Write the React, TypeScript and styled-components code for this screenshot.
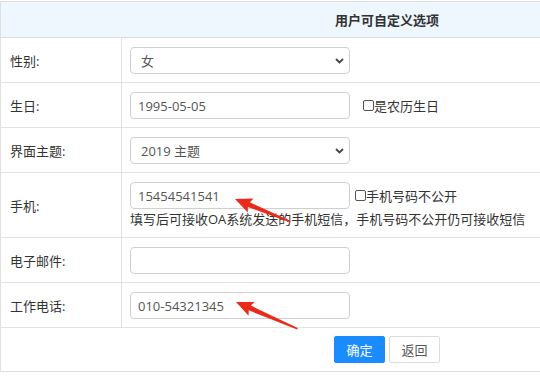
import React from "react";
import styled, { createGlobalStyle } from "styled-components";

const GlobalStyle = createGlobalStyle`
  html, body { margin: 0; padding: 0; overflow: hidden; background: #fff; }
  body {
    font-family: "Open Sans", "Noto Sans CJK SC", sans-serif;
    font-size: 13px;
    color: #333;
  }
`;

const Page = styled.div`
  position: relative;
  padding-top: 1px;
  width: 540px;
  height: 378px;
  overflow: hidden;
`;

const Table = styled.table`
  width: 774px;
  border-collapse: collapse;
  table-layout: fixed;
  border: 1px solid #dfdfdf;
`;

const LabelCol = styled.col`
  width: 121px;
`;

const FieldCol = styled.col``;

const HeadCell = styled.th`
  height: 35px;
  padding: 0;
  background: #eef7fe;
  font-weight: bold;
  font-size: 13px;
  color: #333;
  text-align: center;
  border-bottom: 1px solid #dcdcdc;
`;

const Row = styled.tr`
  border-bottom: 1px solid #e2e2e2;
`;

const LabelCell = styled.td`
  padding: 0 0 0 9px;
  border-right: 1px solid #e2e2e2;
  vertical-align: middle;
  color: #333;
  white-space: nowrap;
`;

const FieldCell = styled.td`
  padding: 9px 8px 8px 8px;
  vertical-align: middle;
  white-space: nowrap;
`;

const FieldLine = styled.div`
  display: flex;
  align-items: center;
`;

const TextInput = styled.input`
  box-sizing: border-box;
  width: 220px;
  height: 27px;
  border: 1px solid #cfcfcf;
  border-radius: 4px;
  padding: 0 7px;
  font-family: "Open Sans", "Noto Sans CJK SC", sans-serif;
  font-size: 13px;
  color: #555;
  background: #fff;
  outline: none;
`;

const SelectWrap = styled.div`
  position: relative;
  width: 220px;
  height: 27px;
`;

const Select = styled.select`
  appearance: none;
  -webkit-appearance: none;
  box-sizing: border-box;
  width: 220px;
  height: 27px;
  border: 1px solid #cfcfcf;
  border-radius: 4px;
  padding: 0 24px 0 10px;
  font-family: "Open Sans", "Noto Sans CJK SC", sans-serif;
  font-size: 13px;
  color: #555;
  background: #fff;
  outline: none;
`;

const Chevron = styled.svg`
  position: absolute;
  right: 6px;
  top: 11px;
  width: 9px;
  height: 6px;
  pointer-events: none;
`;

const CheckLabel = styled.label<{ $gap: number }>`
  display: inline-flex;
  align-items: center;
  margin-left: ${(p) => p.$gap}px;
  color: #333;
`;

const Check = styled.input`
  appearance: none;
  -webkit-appearance: none;
  box-sizing: border-box;
  width: 11px;
  height: 11px;
  margin: 0;
  border: 1px solid #555;
  border-radius: 2px;
  background: #fff;
`;

const Hint = styled.div`
  line-height: 20px;
  height: 20px;
  color: #333;
`;

const ActionCell = styled.td`
  padding: 8px 0 8px 0;
  text-align: center;
`;

const Button = styled.button<{ $primary?: boolean }>`
  box-sizing: border-box;
  width: 51px;
  height: 27px;
  margin: 0 2px;
  border-radius: 2px;
  border: 1px solid ${(p) => (p.$primary ? "#1a8cff" : "#dcdcdc")};
  background: ${(p) => (p.$primary ? "#1a8cff" : "#fff")};
  color: ${(p) => (p.$primary ? "#fff" : "#555")};
  font-family: "Open Sans", "Noto Sans CJK SC", sans-serif;
  font-size: 13px;
  padding: 0;
  vertical-align: middle;
`;

const Overlay = styled.svg`
  position: absolute;
  left: 0;
  top: 0;
  width: 540px;
  height: 379px;
  pointer-events: none;
`;

type ArrowProps = { x: number; y: number; len: number; angle: number };

const Arrow = ({ x, y, len, angle }: ArrowProps) => (
  <polygon
    fill="#ea2b1c"
    transform={`translate(${x} ${y}) rotate(${angle})`}
    points={`0,0 17,-7.5 15,-2.6 ${len},-0.8 ${len},0.8 15,2.6 17,7.5`}
  />
);

const ChevronIcon = () => (
  <Chevron viewBox="0 0 9 6">
    <path d="M1 1 L4.5 4.5 L8 1" fill="none" stroke="#444" strokeWidth="1.8" />
  </Chevron>
);

export default function App() {
  return (
    <Page>
      <GlobalStyle />
      <Table>
        <colgroup>
          <LabelCol />
          <FieldCol />
        </colgroup>
        <thead>
          <tr>
            <HeadCell colSpan={2}>用户可自定义选项</HeadCell>
          </tr>
        </thead>
        <tbody>
          <Row>
            <LabelCell>性别:</LabelCell>
            <FieldCell>
              <SelectWrap>
                <Select defaultValue="f">
                  <option value="f">女</option>
                  <option value="m">男</option>
                </Select>
                <ChevronIcon />
              </SelectWrap>
            </FieldCell>
          </Row>
          <Row>
            <LabelCell>生日:</LabelCell>
            <FieldCell>
              <FieldLine>
                <TextInput defaultValue="1995-05-05" />
                <CheckLabel $gap={13}>
                  <Check type="checkbox" />
                  是农历生日
                </CheckLabel>
              </FieldLine>
            </FieldCell>
          </Row>
          <Row>
            <LabelCell>界面主题:</LabelCell>
            <FieldCell>
              <SelectWrap>
                <Select defaultValue="2019">
                  <option value="2019">2019 主题</option>
                </Select>
                <ChevronIcon />
              </SelectWrap>
            </FieldCell>
          </Row>
          <Row>
            <LabelCell>手机:</LabelCell>
            <FieldCell>
              <FieldLine>
                <TextInput defaultValue="15454541541" />
                <CheckLabel $gap={5}>
                  <Check type="checkbox" />
                  手机号码不公开
                </CheckLabel>
              </FieldLine>
              <Hint>填写后可接收OA系统发送的手机短信，手机号码不公开仍可接收短信</Hint>
            </FieldCell>
          </Row>
          <Row>
            <LabelCell>电子邮件:</LabelCell>
            <FieldCell>
              <TextInput defaultValue="" />
            </FieldCell>
          </Row>
          <Row>
            <LabelCell>工作电话:</LabelCell>
            <FieldCell>
              <TextInput defaultValue="010-54321345" />
            </FieldCell>
          </Row>
          <tr>
            <ActionCell colSpan={2}>
              <Button $primary>确定</Button>
              <Button>返回</Button>
            </ActionCell>
          </tr>
        </tbody>
      </Table>
      <Overlay viewBox="0 0 540 379">
        <Arrow x={235} y={199} len={60} angle={22.4} />
        <Arrow x={236} y={302} len={67} angle={23.5} />
      </Overlay>
    </Page>
  );
}
